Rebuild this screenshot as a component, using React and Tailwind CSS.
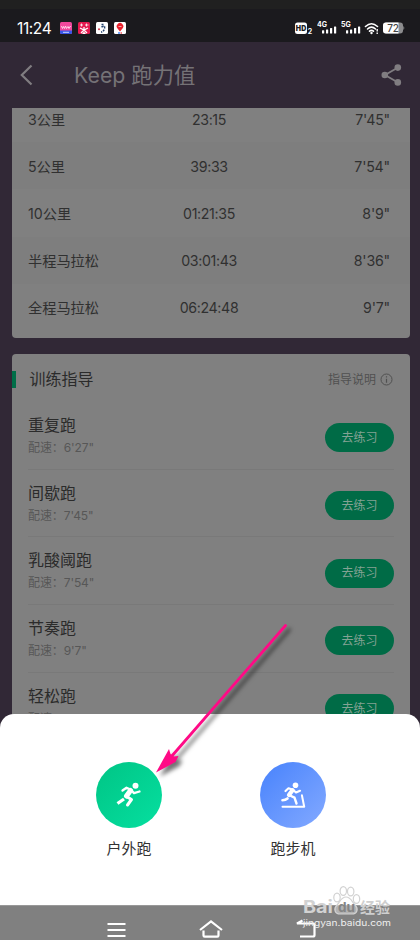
import React from 'react';

const records = [
    { distance: '3公里', time: '23:15', pace: "7'45\"" },
    { distance: '5公里', time: '39:33', pace: "7'54\"" },
    { distance: '10公里', time: '01:21:35', pace: "8'9\"" },
    { distance: '半程马拉松', time: '03:01:43', pace: "8'36\"" },
    { distance: '全程马拉松', time: '06:24:48', pace: "9'7\"" },
];

const trainings = [
    { name: '重复跑', pace: "6'27\"" },
    { name: '间歇跑', pace: "7'45\"" },
    { name: '乳酸阈跑', pace: "7'54\"" },
    { name: '节奏跑', pace: "9'7\"" },
    { name: '轻松跑', pace: "11'4\"" },
];

const Signal = ({ label }) => (
    <svg width="20" height="14" viewBox="0 0 20 14" className="text-white">
        <text x="0" y="6" fontSize="7" fontWeight="700" fill="currentColor">{label}</text>
        <g fill="currentColor">
            <rect x="5" y="9.2" width="2.2" height="3.4" rx="0.5" />
            <rect x="9" y="8.4" width="2.2" height="4.2" rx="0.5" />
            <rect x="13" y="7" width="2.2" height="5.6" rx="0.5" />
            <rect x="17" y="5.4" width="2.2" height="7.2" rx="0.5" />
        </g>
    </svg>
);

const StatusBar = () => (
    <div className="h-[33px] bg-[#1b1a1e] flex items-center pl-[17px] pr-[15px] pt-1 text-white">
        <span className="w-[43px] mt-[3px] text-[15.5px] leading-none tracking-[-0.4px]">11:24</span>
        {/* NOTIFICATIONS */}
        <div className="flex gap-[6px] mt-px">
            <svg width="12" height="12" viewBox="0 0 12 12">
                <rect width="12" height="12" rx="1.5" fill="#f0489c" />
                <path d="M0 8.500h12v2a1.500 1.500 0 0 1-1.500 1.500h-9a1.500 1.500 0 0 1-1.500-1.500z" fill="#3856e8" />
                <path d="M1.500 4l1 2.500 1-2 1 2 1-2.500 1 2.500 1.500-2 1 2 1.500-2.500" stroke="#ffd5ea" fill="none" />
                <path d="M3 10.300h6" stroke="#c9d4ff" />
            </svg>
            <svg width="12" height="12" viewBox="0 0 12 12">
                <rect width="12" height="12" rx="1.5" fill="#e5194f" />
                <path d="M2 3h3M3.500 1.500v3M7 3h3.500M8.500 1.500v3" stroke="#fff" strokeWidth="0.800" />
                <path d="M3 11l3-3 3 3M2 6l4 2 4-2M6 5v3" stroke="#fff" strokeWidth="1.300" fill="none" />
                <path d="M4 12l2-2.500L8 12z" fill="#fff" />
            </svg>
            <svg width="12" height="12" viewBox="0 0 12 12">
                <rect width="12" height="12" rx="1.5" fill="#fff" />
                <path d="M5.500 2.500h2.500M5.500 5q4-2 3 1.500T5 10" stroke="#26456f" strokeWidth="1.500" fill="none" strokeDasharray="2 1" />
                <circle cx="3" cy="7.200" r="1" fill="#d4394b" />
            </svg>
            <svg width="12" height="12" viewBox="0 0 12 12">
                <rect width="12" height="12" rx="1.5" fill="#fff" />
                <path d="M6 9.500L3.500 6.500a3.300 3.300 0 1 1 5 0z" fill="#e8202c" />
                <path d="M4.500 4.500h3" stroke="#fff" strokeWidth="0.600" />
                <circle cx="5" cy="11" r="0.900" fill="#3b82f6" />
                <circle cx="7.200" cy="11" r="0.800" fill="#e8202c" />
            </svg>
        </div>
        {/* CONNECTION AND BATTERY */}
        <div className="ml-auto mt-px flex items-center">
            <svg width="18" height="13" viewBox="0 0 18 13">
                <rect x="0" y="0.500" width="12" height="11.500" rx="2.500" fill="#fff" />
                <text x="0.800" y="8.800" fontSize="7" fontWeight="900" fill="#1b1a1e" textLength="10.500">HD</text>
                <text x="12.800" y="12" fontSize="7" fontWeight="700" fill="#fff">2</text>
            </svg>
            <div className="ml-[4px] flex gap-[4px]">
                <Signal label="4G" />
                <Signal label="5G" />
            </div>
            <svg width="16" height="13" viewBox="0 0 16 13" className="ml-[3px]">
                <g stroke="#fff" strokeWidth="1.600" fill="none" strokeLinecap="round">
                    <path d="M1.500 4.500q6-5.500 12 0" />
                    <path d="M3.500 7q4-3.600 8 0" />
                    <path d="M5.500 9.200q2-1.700 4 0" />
                </g>
                <circle cx="7.500" cy="11" r="1.200" fill="#fff" />
                <path d="M13.200 7v2.500M13.200 10.500v1.500" stroke="#fff" strokeWidth="1.400" />
            </svg>
            <svg width="22" height="12" viewBox="0 0 22 12" className="ml-[3px]">
                <rect x="0" y="0.500" width="20" height="11" rx="3" fill="#8c8c8e" />
                <path d="M20.300 4q2 2 0 4z" fill="#8c8c8e" />
                <path d="M3 .5h12.500v11h-12.500a3 3 0 0 1-3-3v-5a3 3 0 0 1 3-3z" fill="#fff" />
                <text x="4.300" y="9.700" fontSize="10" fontWeight="500" fill="#444" textLength="11.500">72</text>
            </svg>
        </div>
    </div>
);

const Header = () => (
    <div className="h-[66px] flex items-center pl-5 pr-[18px] text-[#807d81]">
        <svg width="13" height="22" viewBox="0 0 13 22">
            <path d="M11.500 1.500L1.800 11l9.700 9.500" fill="none" stroke="currentColor" strokeWidth="2.200" />
        </svg>
        <h1 className="ml-[41px] mt-0.5 text-[21.3px] leading-none text-[#757276] whitespace-nowrap">Keep 跑力值</h1>
        <svg width="21" height="22" viewBox="0 0 21 22" className="ml-auto">
            <path d="M17 3.500L4 11l13 7.500" fill="none" stroke="currentColor" strokeWidth="1.800" />
            <g fill="currentColor">
                <circle cx="16.800" cy="3.600" r="3.300" />
                <circle cx="3.800" cy="11" r="3.300" />
                <circle cx="16.800" cy="18.400" r="3.300" />
            </g>
        </svg>
    </div>
);

const RecordTable = () => (
    <div className="h-[230px] ml-3 mr-[10px] flex flex-col justify-end overflow-hidden rounded-b-[4px] bg-[#808080] pb-[7px]">
        {records.map((r, i) => (
            <div
                key={r.distance}
                className={`h-[47.2px] shrink-0 grid grid-cols-[120px_122px_120px] items-center pl-4 pt-px text-[14.2px] text-[#303030] ${i % 2 ? 'bg-[#7e7e7e]' : ''}`}
            >
                <span>{r.distance}</span>
                <span className="text-center tracking-[-0.35px]">{r.time}</span>
                <span className="text-right tracking-[-0.2px]">{r.pace}</span>
            </div>
        ))}
    </div>
);

const TrainingGuide = () => (
    <div className="mt-4 ml-3 mr-[10px] rounded-t-[4px] bg-[#808080]">
        <div className="h-[48px] flex items-center pt-[3px] pr-[17px]">
            <div className="w-[3.5px] h-[17px] -mt-px bg-[#006e48]" />
            <h2 className="ml-[14px] -mt-px text-[16px] text-[#2b2b2b]">训练指导</h2>
            <div className="ml-auto flex items-center gap-[4px] text-[12px] text-[#505050]">
                <span>指导说明</span>
                <svg width="13" height="13" viewBox="0 0 13 13" fill="none" stroke="currentColor">
                    <circle cx="6.500" cy="6.500" r="5.500" />
                    <path d="M6.500 5.700v4M6.500 3.300v1.200" strokeWidth="1.200" />
                </svg>
            </div>
        </div>
        {trainings.map((t) => (
            <div key={t.name} className="ml-4 mr-4 h-[67.7px] flex items-center justify-between border-b border-[#797979]">
                <div className="pt-px">
                    <p className="text-[16px] leading-[23px] text-[#2b2b2b]">{t.name}</p>
                    <p className="text-[12px] leading-[21px] text-[#575757] tracking-[-0.1px]">配速：{t.pace}</p>
                </div>
                <button className="mt-[5px] w-[69px] h-[29px] rounded-full bg-[#006b46] text-[12px] leading-none text-[#83a294]">去练习</button>
            </div>
        ))}
    </div>
);

const RunnerIcon = () => (
    <svg width="26" height="26" viewBox="0 0 26 26" fill="none" stroke="#fff" strokeLinecap="round" strokeLinejoin="round">
        <circle cx="19.500" cy="3.800" r="3" fill="#fff" stroke="none" />
        <path d="M6.500 8.500l4-2.800 4.500 2 3 3.500 5.500-1.700" strokeWidth="2.300" />
        <path d="M14.500 8.500l-4 5.500" strokeWidth="5" />
        <path d="M10.500 14.500l5 3-4 5.500" strokeWidth="3" />
        <path d="M8 17l-6.500 4.500" strokeWidth="3.200" strokeLinecap="butt" />
    </svg>
);

const TreadmillIcon = () => (
    <svg width="26" height="26" viewBox="0 0 26 26" fill="none" stroke="#fff" strokeLinecap="round" strokeLinejoin="round">
        <circle cx="15.500" cy="3.300" r="2.800" fill="#fff" stroke="none" />
        <path d="M5.500 9l3-2.700 4.500 1.500 3 2.700 4-1.700" strokeWidth="2.200" />
        <path d="M12.500 8.200l-3.500 4.800" strokeWidth="4.200" />
        <path d="M10 13.500l4.500 2.200 2 5.800" strokeWidth="2.400" />
        <path d="M7.500 16.500q-2 1.800-5 1.800" strokeWidth="2.600" />
        <path d="M2.500 24.700h21.700l-2.300-11.500" strokeWidth="2" />
    </svg>
);

const RunSheet = () => (
    <div className="absolute inset-x-0 top-[714px] h-[191px] rounded-t-[14px] bg-white flex justify-center gap-[98px] pt-[48px] pl-[2px]">
        <div className="w-[66px] flex flex-col items-center">
            <div className="w-[66px] h-[66px] rounded-full bg-linear-to-br from-[#00c585] to-[#06dfa0] flex items-center justify-center">
                <RunnerIcon />
            </div>
            <span className="mt-[10px] text-[15px] leading-[22px] text-[#333]">户外跑</span>
        </div>
        <div className="w-[66px] flex flex-col items-center">
            <div className="w-[66px] h-[66px] rounded-full bg-linear-to-br from-[#4782fc] to-[#83a9ff] flex items-center justify-center">
                <TreadmillIcon />
            </div>
            <span className="mt-[10px] text-[15px] leading-[22px] text-[#333]">跑步机</span>
        </div>
    </div>
);

const NavBar = () => (
    <div className="absolute inset-x-0 bottom-0 h-[35px] bg-[#808080] border-t border-[#989898]">
        <svg width="420" height="34" viewBox="0 0 420 34" fill="none" stroke="#fff" strokeWidth="2.200">
            <path d="M107.500 18h18M107.500 24h18M107.500 30h18" />
            <path d="M200 24l11-8.500 11 8.500M203.500 24.500v5q0 1.200 1.200 1.200h12.600q1.200 0 1.200-1.200v-5" />
            <path d="M297 17.500h16q1.500 0 1.500 1.500v10q0 1.500-1.500 1.500h-13M302.500 14.500l-5.500 3h5" />
        </svg>
    </div>
);

const Watermark = () => (
    <div className="absolute left-[301px] top-[884px] w-[100px] h-[46px]">
        <svg width="100" height="46" viewBox="0 0 100 46">
            <g fill="#ffffff" fillOpacity="0.4" stroke="#d2d2d2" strokeWidth="1.200">
                <ellipse cx="36" cy="13.500" rx="3.200" ry="4.400" />
                <ellipse cx="42.300" cy="7" rx="3.200" ry="4.400" />
                <ellipse cx="49.700" cy="7.500" rx="3.200" ry="4.400" />
                <ellipse cx="55.500" cy="15" rx="3.200" ry="4.400" />
                <path d="M45 13c5 0 6 5 9 8 4 4 2 9-3 9h-12c-5 0-7-5-3-9 3-3 4-8 9-8z" />
            </g>
            <text x="2" y="28.800" fontSize="17.500" fontWeight="700" fill="#d2d2d2" textLength="30" lengthAdjust="spacingAndGlyphs">Bai</text>
            <text x="37" y="28" fontSize="13" fontWeight="700" fill="#858585" textLength="17" lengthAdjust="spacingAndGlyphs">du</text>
            <text x="59" y="28.500" fontSize="15" fontWeight="700" fill="#cfcfcf">经验</text>
            <text x="2" y="41.500" fontSize="8.500" fill="#eeeeee" textLength="88" lengthAdjust="spacingAndGlyphs">jingyan.baidu.com</text>
        </svg>
    </div>
);

const Pointer = () => (
    <svg className="absolute left-[145px] top-[615px]" width="155" height="170" viewBox="0 0 155 170">
        <g className="drop-shadow-[4px_4px_2px_rgba(0,0,0,0.55)]">
            <path d="M140.500 10.500L26 142" fill="none" stroke="#ff0a86" strokeWidth="2.800" strokeLinecap="round" />
            <path d="M11 157.500l13-23.500 1.500 5 3.500 2.500 4.500-.5-3 6z" fill="#ff0a86" />
        </g>
    </svg>
);

const App = () => {
    return (
        <div className="relative w-[420px] h-[940px] overflow-hidden bg-[#312836] font-['Inter','Noto_Sans_CJK_SC',sans-serif]">
            <div className="h-[9px] bg-[#202020]" />
            <StatusBar />
            <Header />
            <RecordTable />
            <TrainingGuide />
            <RunSheet />
            <NavBar />
            <Watermark />
            <Pointer />
        </div>
    );
};

export default App;
